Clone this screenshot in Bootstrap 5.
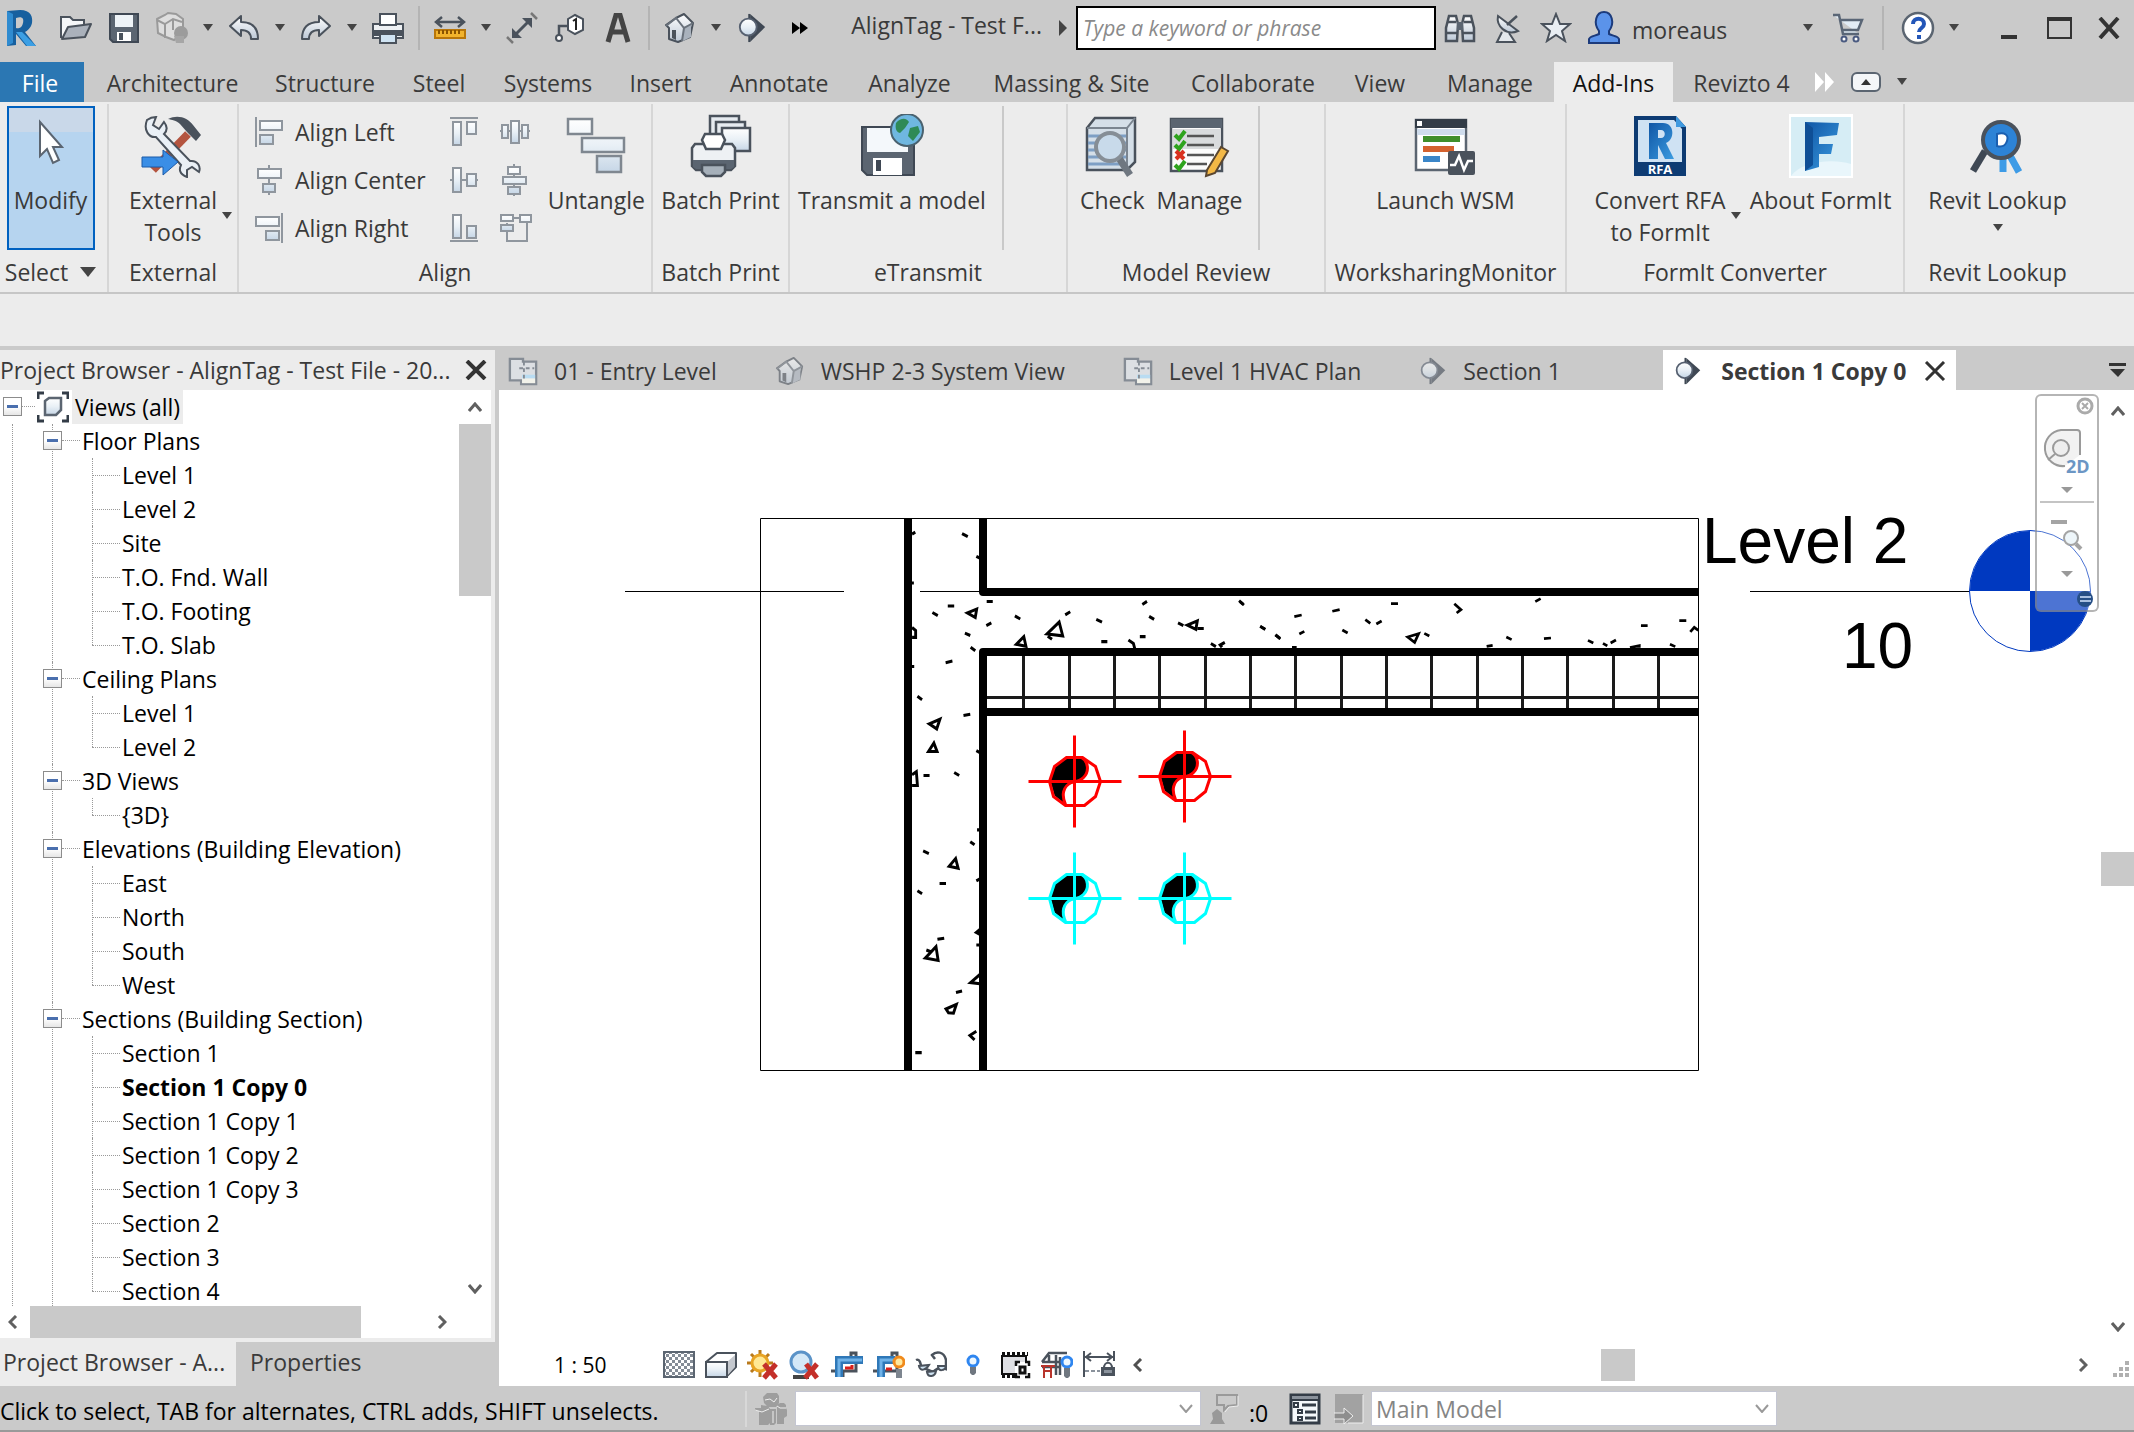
<!DOCTYPE html>
<html lang="en">
<head>
<meta charset="utf-8">
<meta name="viewport" content="width=device-width, initial-scale=1">
<title>AlignTag - Test File</title>
<link href="https://cdn.jsdelivr.net/npm/bootstrap@5.3.0/dist/css/bootstrap.min.css" rel="stylesheet">
<style>
:root{--chrome:#cacaca;--panel:#ececec;--ink:#3a3a3a;--rule:#cdcdcd}
body{font-family:"Open Sans","Noto Sans",sans-serif;font-size:23px;line-height:32px;color:var(--ink);background:#fff}
button{color:inherit;background:none;border:0;padding:0;line-height:inherit}
svg{display:block;flex:none}
.app{height:100vh;overflow:hidden}
.work{min-height:0}
.bg-chrome{background:var(--chrome)}
.bg-panel{background:var(--panel)}
.caret{width:0;height:0;border:5px solid transparent;border-top:7px solid #444;border-bottom:0;display:block}
.caret-lg{border-width:10px 8px 0}
/* title bar */
.titlebar{height:62px;padding-bottom:6px}
.logo-btn{width:52px;padding-left:6px}
.tool{width:48px;height:44px;display:flex;align-items:center;justify-content:center}
.tool-caret{width:24px;height:44px;display:flex;align-items:center;justify-content:center}
.vrule{width:2px;height:44px;background:#b4b4b4;margin:0 6px}
.vrule-wide{margin:0 10px}
.doc-title{padding-bottom:6px}
.search{width:360px;height:44px;border:2px solid #000;border-radius:0;font-size:21px;font-style:italic;padding:0 5px;background:#fff}
.search::placeholder{color:#8a8a8a;opacity:1}
.user{width:168px}
.win{width:50px;height:44px;display:flex;align-items:center;justify-content:center}
.win-group{margin-left:18px}
/* ribbon tabs */
.ribbon-tabs{height:40px;display:grid;grid-template-columns:88fr 169fr 136fr 92fr 126fr 99fr 138fr 123fr 201fr 162fr 92fr 128fr 119fr 137fr 324fr}
.ribbon-tabs a{display:flex;align-items:center;justify-content:center;height:40px;padding-top:2px;color:var(--ink);text-decoration:none;white-space:nowrap;min-width:0}
.ribbon-tabs a.file-tab{background:#2b77b3;color:#fff;margin-right:4px;padding-right:4px}
.ribbon-tabs a.current{background:var(--panel);color:#111}
.ribbon-tabs .tab-extras{min-width:0;padding-left:5px}
/* ribbon */
.ribbon{display:grid;grid-template-columns:109fr 130fr 414fr 137fr 278fr 258fr 241fr 338fr 229fr;height:192px;border-bottom:2px solid #c6c6c6}
.pane{border-right:2px solid #d6d6d6;margin:2px 0;display:flex;flex-direction:column;white-space:nowrap;min-width:0}
.pane:first-child{padding-right:6px}
.pane:last-child{border-right:0;padding-right:44px}
.pane-body{height:148px;padding-top:2px;display:flex;justify-content:center}
.pane-title{height:40px;display:flex;align-items:center;justify-content:center;gap:12px}
.big{height:144px;display:flex;flex-direction:column;align-items:center;padding-top:8px}
.big svg{height:64px;margin-bottom:6px}
.big span{display:block}
.modify{width:88px;border:2px solid #0061c0;background:linear-gradient(#c9d8e9 0 24px,#b6d4ef 24px);padding-top:6px}
.with-caret{position:relative}
.side-caret{position:absolute;right:-15px;top:106px}
.small-cmds{display:grid;grid-template-rows:repeat(3,48px);margin-top:2px}
.cmd{display:flex;align-items:center;gap:12px;height:48px}
.pane-sep{width:2px;background:#c9c9c9;height:144px}
.model-review{padding-left:12px}
.options{height:52px}
/* browser */
.browser{width:499px;border-right:4px solid var(--chrome)}
.browser-head{height:40px}
.browser-list{background:#fff;margin-right:4px}
.tree{position:relative;color:#000;white-space:nowrap}
.tree ul{list-style:none;margin:0;padding:0}
.trow{height:34px;display:flex;align-items:center}
.toggle{width:19px;height:19px;border:1px solid #8c8c8c;background:linear-gradient(#fff 50%,#e6e6e6);display:flex;align-items:center;justify-content:center;position:relative;flex:none}
.toggle::after{content:"";width:11px;height:3px;background:#4a6fae}
.dots{border-top:1px dotted #999;width:18px;margin-right:2px}
.root-row{padding-left:3px}
.root-row .dots{width:13px}
.root-row .root-name{background:var(--panel);height:34px;padding:0 3px;margin-left:3px;display:flex;align-items:center}
.root-line::before,.groups>li::before,.leaves>li::before{content:"";position:absolute;border-left:1px dotted #999;top:0;bottom:0}
.root-line{position:relative}
.root-line::before{left:12px}
.groups>li{position:relative}
.groups>li::before{left:52px}
.groups>li>.trow{padding-left:43px}
.leaves>li{position:relative;height:34px;display:flex;align-items:center;padding-left:92px;line-height:28px}
.leaves>li::before{left:92px}
.leaves>li:last-child::before{bottom:17px}
.leaves>li::after{content:"";position:absolute;left:92px;top:17px;width:28px;border-top:1px dotted #999}
.leaves a{color:#000;text-decoration:none;padding-left:30px}
.sb-v{width:32px}
.sb-cap{height:34px;display:flex;align-items:center;justify-content:center}
.thumb{background:#c9c9c9}
.sb-v .thumb{height:172px}
.sb-h{height:32px}
.sb-h .thumb{width:331px}
.sb-h .sb-cap{width:30px;height:32px}
.sb-h .corner{width:34px}
.browser-tabs{height:48px}
.browser-tabs button{height:48px;padding:0 3px;text-align:left}
.browser-tabs .on{background:var(--panel);width:236px}
.browser-tabs .off{box-shadow:inset 0 4px var(--panel);background:var(--chrome);flex:1;padding-left:14px}
/* document tabs */
.doc-tabs{height:40px}
.doc-tab{height:40px;min-width:253px;display:flex;align-items:center;gap:15px;padding:2px 49px 0 8px;white-space:nowrap}
.doc-tab.on{background:#fff;font-weight:700;padding:2px 10px 0;gap:18px}
.sheet{position:relative}
.sheet>svg.drawing{width:100%;height:100%}
.sheet text{font-family:"Liberation Sans",Arial,sans-serif;font-size:64px;fill:#000}
.sheet .wheel-label{font:700 18px "Open Sans",sans-serif;fill:#6c96c4}
.navbox{position:absolute;top:4px;right:2px;width:64px;height:218px;border:2px solid rgba(120,120,120,.55);border-radius:6px;background:rgba(255,255,255,.3)}
.canvas-sb{width:33px}
.canvas-sb .thumb{height:34px}
.view-bar{height:42px}
.scale{width:109px;margin-left:55px;color:#000;font-size:21px;text-align:left}
.view-icons{gap:10px}
.view-icons button{width:32px;display:flex;justify-content:center}
.view-bar .thumb{width:34px;height:32px}
/* status bar */
.statusbar{height:46px;border-top:1px solid var(--chrome);border-bottom:2px solid #9a9a9a;color:#000}
.status-msg{width:747px;border-right:2px solid #d8d8d8;white-space:nowrap;overflow:hidden;padding-top:4px}
.request-count{width:34px;padding-top:8px}
.option-btn{width:44px}
.combo{position:relative;width:406px}
.combo select{appearance:none;width:100%;height:35px;border:1px solid #c4c6d2;border-radius:0;background:#fff;color:#858585;padding:0 4px;font-size:23px;line-height:30px;display:block}
.combo svg{position:absolute;right:8px;top:13px;pointer-events:none}
</style>
</head>
<body>
<svg width="0" height="0" class="position-absolute" aria-hidden="true">
  <defs>
    <linearGradient id="gl" x1="0" y1="0" x2="0" y2="1"><stop offset="0" stop-color="#fff"/><stop offset="1" stop-color="#bcc8d6"/></linearGradient>
    <linearGradient id="gb" x1="0" y1="0" x2="1" y2="1"><stop offset="0" stop-color="#0f56a5"/><stop offset="1" stop-color="#3b9be0"/></linearGradient>
    <linearGradient id="gs" x1="0" y1="0" x2="0" y2="1"><stop offset="0" stop-color="#fff"/><stop offset=".5" stop-color="#e9f0f6"/><stop offset="1" stop-color="#c6d6e6"/></linearGradient>
    <symbol id="house" viewBox="0 0 32 32"><path d="M2 13 12 6 20 2 29 11 26 25 14 30 5 27V16Z" fill="url(#gl)" stroke="#4a525c" stroke-width="2" stroke-linejoin="round"/><path d="M19 15v14l8-4V12Z" fill="#a9b2bd"/><path d="M2 14 12 6 20 16 29 11M20 16 18 29" fill="none" stroke="#6a727c" stroke-width="2"/><path d="M8 18h4v10l-4-2z" fill="#4a525c"/></symbol>
    <symbol id="sect" viewBox="0 0 32 32"><path d="M14 1 30 15 14 31Z" fill="#3f4854"/><path d="M13 1v30" stroke="#3f4854" stroke-width="2"/><circle cx="12" cy="15" r="9" fill="url(#gs)" stroke="#566070" stroke-width="2"/></symbol>
    <symbol id="plan" viewBox="0 0 32 32"><path d="M2 3h14v3h14v24H14v-4H2Z" fill="#dcdfe3" stroke="#858c95" stroke-width="2.500"/><path d="M15 20h14v4H15z" fill="#b9dcf2"/><path d="M15 24h14v5H15z" fill="#f2f2ea"/><path d="M17 6v18M12 13h16" stroke="#858c95" stroke-width="2" stroke-dasharray="4 3"/></symbol>
  </defs>
</svg>

<div class="app d-flex flex-column">
<header class="titlebar bg-chrome d-flex align-items-center">
  <button class="logo-btn" aria-label="Application menu"><svg width="32" height="38" viewBox="0 0 32 38"><path d="M1 2 14 1C25 1 27 8 26 14 25 19 21 22 19 23L30 37H20L10 25V36L1 37Z" fill="#17609f"/><path d="M10 9c6-2 8 0 7 5s-5 6-7 5Z" fill="#cacaca"/><path d="M1 2 7 5V34L1 37Z" fill="#2f8bd0"/><path d="M10 23h6L30 37H21Z" fill="#3c9fe4"/></svg></button>
  <button class="tool" aria-label="Open"><svg width="32" height="26" viewBox="0 0 32 26"><path d="M1 23V2h9l3 3h11v5" fill="#f4f6f8" stroke="#4a525c" stroke-width="2"/><path d="M2 24 8 12 31 9 25 22Z" fill="#aab1bb" stroke="#4a525c" stroke-width="2" stroke-linejoin="round"/></svg></button>
  <button class="tool" aria-label="Save"><svg width="30" height="30" viewBox="0 0 30 30"><path d="M1 1h28v28H4l-3-3Z" fill="#5b6571" stroke="#3f4854" stroke-width="2"/><path d="M6 2h18v12H6z" fill="#eef3f7"/><path d="M8 19h14v9H8z" fill="#fff"/><path d="M10 20h4v7h-4z" fill="#4a525c"/></svg></button>
  <button class="tool" aria-label="Synchronize"><svg width="32" height="32" viewBox="0 0 32 32"><path d="M1 7 9 3l3-2 8 1 7 5v14l-9 7-8-3-8-4Z" fill="#dedede" stroke="#9a9a9a" stroke-width="2"/><path d="M1 8l8 4v14M9 12l8-5 9 3M17 8v10" fill="none" stroke="#9a9a9a" stroke-width="2"/><circle cx="25" cy="21" r="7" fill="#9c9c9c"/><path d="M18 24h10v7h-8z" fill="#a6a6a6"/></svg></button>
  <button class="tool-caret" aria-label="Synchronize options"><span class="caret"></span></button>
  <button class="tool" aria-label="Undo"><svg width="32" height="28" viewBox="0 0 32 28"><path d="M2 12 13 2v6c11 0 17 6 17 17h-7c0-6-3-9-10-9v6Z" fill="url(#gl)" stroke="#4a525c" stroke-width="2" stroke-linejoin="round"/></svg></button>
  <button class="tool-caret" aria-label="Undo list"><span class="caret"></span></button>
  <button class="tool" aria-label="Redo"><svg width="32" height="28" viewBox="0 0 32 28"><path d="M30 12 19 2v6C8 8 2 14 2 25h7c0-6 3-9 10-9v6Z" fill="url(#gl)" stroke="#4a525c" stroke-width="2" stroke-linejoin="round"/></svg></button>
  <button class="tool-caret" aria-label="Redo list"><span class="caret"></span></button>
  <button class="tool" aria-label="Print"><svg width="32" height="32" viewBox="0 0 32 32"><path d="M1 12h30v14H1z" fill="#edf0f3" stroke="#4a525c" stroke-width="2"/><path d="M8 2h16v11H8z" fill="#fff" stroke="#4a525c" stroke-width="2"/><path d="M2 18h28v6H2z" fill="#4a525c"/><path d="M8 22h16v9H8z" fill="#cfe3f2" stroke="#4a525c" stroke-width="2"/></svg></button>
  <span class="vrule"></span>
  <button class="tool" aria-label="Measure"><svg width="32" height="24" viewBox="0 0 32 24"><path d="M2 6h28M8 1 2 6l6 5M24 1l6 5-6 5" fill="none" stroke="#4a525c" stroke-width="2.500"/><path d="M1 14h30v8H1z" fill="#f2b32c" stroke="#b8760a" stroke-width="2"/><path d="M5 14v4M9 14v4M13 14v4M17 14v4M21 14v4M25 14v4" stroke="#8a5400" stroke-width="2"/></svg></button>
  <button class="tool-caret" aria-label="Measure options"><span class="caret"></span></button>
  <button class="tool" aria-label="Aligned dimension"><svg width="32" height="32" viewBox="0 0 32 32"><path d="M7 25 25 7" stroke="#4a525c" stroke-width="3"/><path d="M6 26V16l10 10ZM26 6v10L16 6Z" fill="#4a525c"/><path d="M1 25l6 6M25 1l6 6" stroke="#777" stroke-width="2.500"/></svg></button>
  <button class="tool" aria-label="Tag by category"><svg width="32" height="30" viewBox="0 0 32 30"><path d="M14 6 21 2l8 4v11l-8 4-7-4Z" fill="#fff" stroke="#4a525c" stroke-width="2"/><path d="M19 8l3-2v11" fill="none" stroke="#222" stroke-width="2"/><path d="M13 13H5v10" fill="none" stroke="#4a525c" stroke-width="2.500"/><circle cx="5" cy="25" r="3" fill="#fff" stroke="#4a525c" stroke-width="2"/></svg></button>
  <button class="tool" aria-label="Text"><svg width="26" height="30" viewBox="0 0 26 30"><path d="M3 29 11 2h4l8 27M7 19h12" fill="none" stroke="#444" stroke-width="5"/></svg></button>
  <span class="vrule"></span>
  <button class="tool" aria-label="Default 3D view"><svg width="32" height="32"><use href="#house"/></svg></button>
  <button class="tool-caret" aria-label="3D view options"><span class="caret"></span></button>
  <button class="tool" aria-label="Section"><svg width="30" height="30"><use href="#sect"/></svg></button>
  <button class="tool" aria-label="More tools"><svg width="16" height="12" viewBox="0 0 16 12"><path d="M0 0l8 6-8 6ZM8 0l8 6-8 6Z" fill="#000"/></svg></button>
  <span class="doc-title flex-grow-1 text-end text-nowrap">AlignTag - Test F...</span>
  <svg class="mx-2 ms-3" width="10" height="16" viewBox="0 0 10 16"><path d="M1 0l8 8-8 8Z" fill="#444"/></svg>
  <input class="search" type="search" placeholder="Type a keyword or phrase" aria-label="Search help">
  <button class="tool" aria-label="Search"><svg width="32" height="30" viewBox="0 0 32 30"><path d="M5 3h7l2 8-1 17H2V15ZM20 3h7l3 12v13H19l-1-17Z" fill="url(#gl)" stroke="#4a525c" stroke-width="2.500"/><path d="M13 9h6v8h-6z" fill="#5b6571"/><path d="M1 20h12M19 20h12M4 9h8M20 9h8" stroke="#4a525c" stroke-width="2.500"/></svg></button>
  <button class="tool" aria-label="Communication center"><svg width="30" height="30" viewBox="0 0 30 30"><path d="M5 3c-2 10 8 20 20 15Z" fill="url(#gl)" stroke="#4a525c" stroke-width="2"/><path d="M14 12 24 3" stroke="#4a525c" stroke-width="2.500"/><path d="M9 19 4 29h18l-6-9" fill="#e4e8ec" stroke="#4a525c" stroke-width="2"/></svg></button>
  <button class="tool" aria-label="Favorites"><svg width="32" height="31" viewBox="0 0 32 31"><path d="M16 2l4 10h10l-8 7 3 10-9-6-9 6 3-10-8-7h10Z" fill="#e9eef3" stroke="#4a525c" stroke-width="2"/></svg></button>
  <button class="tool" aria-label="Account"><svg width="32" height="33" viewBox="0 0 32 33"><path d="M1 32v-4c1-3 6-3 10-5v-3C5 12 8 1 16 1s11 11 5 19v3c4 2 9 2 10 5v4Z" fill="#5b93ea" stroke="#1c3b7c" stroke-width="2"/></svg></button>
  <span class="user ps-1 pt-1">moreaus</span>
  <button class="tool-caret" aria-label="Account options"><span class="caret"></span></button>
  <button class="tool ms-1" aria-label="App store"><svg width="32" height="30" viewBox="0 0 32 30"><path d="M1 2h6l4 19h16M8 7h22l-4 10H11" fill="#e2ecf5" stroke="#5a6676" stroke-width="2.500"/><circle cx="12" cy="26" r="2.500" fill="#fff" stroke="#4a5a80" stroke-width="2"/><circle cx="24" cy="26" r="2.500" fill="#fff" stroke="#4a5a80" stroke-width="2"/></svg></button>
  <span class="vrule vrule-wide"></span>
  <button class="tool" aria-label="Help"><svg width="34" height="34" viewBox="0 0 34 34"><circle cx="17" cy="17" r="15" fill="#fff" stroke="#5b6571" stroke-width="2.500"/><path d="M12 13c0-7 11-7 11 0 0 4-5 4-5 8" fill="none" stroke="#2356b8" stroke-width="4"/><path d="M16 24h4v4h-4z" fill="#2356b8"/></svg></button>
  <button class="tool-caret" aria-label="Help options"><span class="caret"></span></button>
  <div class="win-group d-flex">
    <button class="win" aria-label="Minimize"><svg width="16" height="22" viewBox="0 0 16 22"><path d="M0 18h16v4H0z" fill="#333"/></svg></button>
    <button class="win" aria-label="Maximize"><svg width="25" height="22" viewBox="0 0 25 22"><path d="M1 1h23v20H1z" fill="none" stroke="#333" stroke-width="2"/><path d="M0 0h25v4H0z" fill="#333"/></svg></button>
    <button class="win" aria-label="Close"><svg width="22" height="22" viewBox="0 0 22 22"><path d="M2 1 20 21M20 1 2 21" stroke="#333" stroke-width="4"/></svg></button>
  </div>
</header>

<nav class="ribbon-tabs bg-chrome">
  <a href="#" class="file-tab">File</a><a href="#">Architecture</a><a href="#">Structure</a><a href="#">Steel</a><a href="#">Systems</a><a href="#">Insert</a><a href="#">Annotate</a><a href="#">Analyze</a><a href="#">Massing &amp; Site</a><a href="#">Collaborate</a><a href="#">View</a><a href="#">Manage</a><a href="#" class="current">Add-Ins</a><a href="#">Revizto 4</a>
  <div class="tab-extras d-flex align-items-center gap-3">
    <svg width="20" height="20" viewBox="0 0 20 20"><path d="M0 0l9 10-9 10ZM10 0l9 10-9 10Z" fill="#fff"/></svg>
    <button aria-label="Minimize ribbon"><svg width="30" height="20" viewBox="0 0 30 20"><rect x="1" y="1" width="28" height="18" rx="5" fill="#f4f6f8" stroke="#5b6571" stroke-width="2"/><path d="M10 13l5-6 5 6Z" fill="#333"/></svg></button>
    <button aria-label="Ribbon options"><span class="caret"></span></button>
  </div>
</nav>

<section class="ribbon bg-panel">
  <div class="pane">
    <div class="pane-body"><button class="big modify"><svg width="30" viewBox="0 0 30 64"><path d="M4 8v34l7-7 6 14 6-3-6-13h9Z" fill="#fff" stroke="#5b6571" stroke-width="2"/></svg><span>Modify</span></button></div>
    <div class="pane-title">Select <span class="caret caret-lg"></span></div>
  </div>
  <div class="pane">
    <div class="pane-body"><button class="big with-caret"><svg width="64" viewBox="0 0 64 64"><path d="M47 20 12 56" stroke="#b4543f" stroke-width="8"/><path d="M27 5c10-5 20-1 25 6l8 10-5 6-9-9-7-8c-4-4-8-4-12-5Z" fill="#4a525c"/><path d="M6 6c4-3 7-3 9-3l-3 8 6 4 5-7c4 5 3 9 0 12l26 27c8-1 11 6 9 11l-7-5-5 3v7c-8-3-8-8-6-12L15 23C8 24 2 16 6 6Z" fill="#eaf0f6" stroke="#4a525c" stroke-width="2"/><path d="M1 43h21v-7l15 12-15 13v-8H1Z" fill="#3a8ee6" stroke="#1b5aa8" stroke-width="1"/></svg><span>External</span><span>Tools</span><i class="caret side-caret"></i></button></div>
    <div class="pane-title">External</div>
  </div>
  <div class="pane">
    <div class="pane-body justify-content-start ps-3">
      <div class="small-cmds me-4">
        <button class="cmd"><svg width="28" height="30" viewBox="0 0 28 30" fill="url(#gs)" stroke="#8f969e" stroke-width="2"><path d="M1 0v30"/><path d="M5 4h22v9H5zM5 18h13v9H5z"/></svg>Align Left</button>
        <button class="cmd"><svg width="28" height="30" viewBox="0 0 28 30" fill="url(#gs)" stroke="#8f969e" stroke-width="2"><path d="M14 0v30"/><path d="M3 4h23v9H3zM8 19h12v8H8z"/></svg>Align Center</button>
        <button class="cmd"><svg width="28" height="30" viewBox="0 0 28 30" fill="url(#gs)" stroke="#8f969e" stroke-width="2"><path d="M27 0v30"/><path d="M1 4h23v9H1zM11 18h13v9H11z"/></svg>Align Right</button>
      </div>
      <div class="small-cmds me-3">
        <button class="cmd" aria-label="Align top"><svg width="30" height="30" viewBox="0 0 30 30" fill="url(#gs)" stroke="#8f969e" stroke-width="2"><path d="M0 1h28"/><path d="M3 5h8v23H3zM17 5h9v12h-9z"/></svg></button>
        <button class="cmd" aria-label="Align middle"><svg width="30" height="30" viewBox="0 0 30 30" fill="url(#gs)" stroke="#8f969e" stroke-width="2"><path d="M0 15h28"/><path d="M3 3h8v24H3zM17 9h9v12h-9z"/></svg></button>
        <button class="cmd" aria-label="Align bottom"><svg width="30" height="30" viewBox="0 0 30 30" fill="url(#gs)" stroke="#8f969e" stroke-width="2"><path d="M0 28h28"/><path d="M3 2h8v23H3zM17 13h9v12h-9z"/></svg></button>
      </div>
      <div class="small-cmds me-3 ms-1">
        <button class="cmd" aria-label="Distribute horizontally"><svg width="30" height="30" viewBox="0 0 30 30" fill="url(#gs)" stroke="#8f969e" stroke-width="2"><path d="M0 14h30"/><path d="M2 8h6v13H2zM11 4h8v22h-8zM22 8h6v13h-6z"/></svg></button>
        <button class="cmd" aria-label="Distribute vertically"><svg width="30" height="32" viewBox="0 0 30 32" fill="url(#gs)" stroke="#8f969e" stroke-width="2"><path d="M14 0v32"/><path d="M8 3h12v7H8zM3 13h23v7H3zM8 23h12v7H8z"/></svg></button>
        <button class="cmd" aria-label="Arrange tags"><svg width="32" height="30" viewBox="0 0 32 30" fill="url(#gs)" stroke="#8f969e" stroke-width="2"><path d="M7 10v18h20V8" fill="none"/><path d="M1 2h12v6H1zM1 12h12v6H1zM20 2h11v7H20zM13 5h7"/></svg></button>
      </div>
      <button class="big"><svg width="60" viewBox="0 0 60 64" fill="url(#gs)" stroke="#7f8790" stroke-width="2.500"><path d="M2 5h24v15H2zM16 24h42v14H16zM31 42h24v16H31z"/></svg><span>Untangle</span></button>
    </div>
    <div class="pane-title">Align</div>
  </div>
  <div class="pane">
    <div class="pane-body"><button class="big"><svg width="62" viewBox="0 0 62 64" stroke="#4a525c" stroke-width="2.500"><path d="M20 2h29v25H20z" fill="#e6ebf0"/><path d="M26 8h29v25H26z" fill="#e6ebf0"/><path d="M32 14h28v23H32z" fill="url(#gs)"/><path d="M5 30h37l3 4v18l-4 4H6l-4-4V34Z" fill="#eef1f4"/><path d="M12 26l3-6h17l3 6-4 9H16Z" fill="#fff"/><path d="M3 46h41v7l-3 2H6l-3-2Z" fill="#5b6571" stroke="none"/><path d="M12 51h23v7l-4 4H16l-4-4Z" fill="#a6b0ba"/></svg><span>Batch Print</span></button></div>
    <div class="pane-title">Batch Print</div>
  </div>
  <div class="pane">
    <div class="pane-body justify-content-start ps-2 gap-3"><button class="big"><svg width="64" viewBox="0 0 64 64"><path d="M2 13h52v48H7l-5-5Z" fill="#5b6571" stroke="#3f4854" stroke-width="2"/><path d="M7 14h41v24H7z" fill="#f4f8fb"/><path d="M13 44h29v17H13z" fill="#fff"/><path d="M16 46h5v11h-5z" fill="#3f4854"/><circle cx="47" cy="16" r="16" fill="#6fb7e0" stroke="#4a626f" stroke-width="2"/><path d="M36 9c5-6 11-5 13-1l-4 6-5 5c-4-1-5-5-4-10ZM50 14l8-2 2 6-7 9-5-5Z" fill="#2f8a57"/></svg><span>Transmit a model</span></button><span class="pane-sep"></span></div>
    <div class="pane-title">eTransmit</div>
  </div>
  <div class="pane">
    <div class="pane-body model-review justify-content-start gap-3"><div class="d-flex gap-2"><button class="big"><svg width="56" viewBox="0 0 56 64"><path d="M3 14 11 4h40v44l-8 8H3Z" fill="#d5dfe8" stroke="#4a525c" stroke-width="2.500"/><path d="M3 14h40l8-10M43 14v42" fill="none" stroke="#7b8590" stroke-width="2"/><path d="M4 22h38M4 29h38M4 36h38M4 43h38M4 50h38" stroke="#7e9fc4" stroke-width="3"/><path d="M35 44 46 61" stroke="#6f7780" stroke-width="7"/><circle cx="26" cy="33" r="14" fill="#c8daea" stroke="#868e96" stroke-width="4"/></svg><span>Check</span></button>
    <button class="big ms-1"><svg width="62" viewBox="0 0 62 64"><path d="M3 5h51v52H3z" fill="#fbfbfb" stroke="#4a525c" stroke-width="2.500"/><path d="M3 5h51v9H3z" fill="#5b6571"/><path d="M5 15h48v20H5z" fill="#d9dbdd"/><path d="M19 22h27M19 31h27M19 41h27M19 50h20" stroke="#555" stroke-width="2.500"/><path d="M7 21l4 4 6-8M7 31l4 4 6-8M7 51l4 4 6-8" fill="none" stroke="#2ea31d" stroke-width="4"/><path d="M8 37l8 8M16 37l-8 8" stroke="#d8311f" stroke-width="4"/><path d="M39 56 53 33l7 4-13 22-9 3Z" fill="#f3b846" stroke="#5a4630" stroke-width="2"/></svg><span>Manage</span></button></div><span class="pane-sep"></span></div>
    <div class="pane-title">Model Review</div>
  </div>
  <div class="pane">
    <div class="pane-body"><button class="big"><svg width="62" viewBox="0 0 62 64"><path d="M2 6h50v50H2z" fill="#fff" stroke="#5b6571" stroke-width="2.500"/><path d="M1 5h52v9H1z" fill="#333c47"/><path d="M3 7h5v5H3z" fill="#fff"/><path d="M3 15h48v6H3z" fill="#cfdcec"/><path d="M9 22h37v6H9z" fill="#3f8f2b"/><path d="M9 32h31v6H9z" fill="#d4622e"/><path d="M9 42h17v6H9z" fill="#3b86c8"/><rect x="34" y="37" width="27" height="24" rx="2" fill="#4a525c"/><path d="M36 51h5l4-9 5 14 4-9h5" fill="none" stroke="#fff" stroke-width="2.500"/></svg><span>Launch WSM</span></button></div>
    <div class="pane-title">WorksharingMonitor</div>
  </div>
  <div class="pane">
    <div class="pane-body gap-4 ps-3"><button class="big with-caret"><svg width="56" viewBox="0 0 56 64"><path d="M2 2h42l10 11v49H2Z" fill="#0d3b73"/><path d="M6 6h36l8 9v33H6Z" fill="#cfe2f3"/><path d="M44 2 54 13H44Z" fill="#3f9ae0"/><path d="M17 9h14c12 0 12 17 3 20l8 16H33L26 31v14h-9Z" fill="url(#gb)"/><path d="M26 16h3c5 0 5 8 0 8h-3Z" fill="#cfe2f3"/><text x="28" y="60" text-anchor="middle" font-family="Open Sans,sans-serif" font-size="13" font-weight="700" fill="#fff">RFA</text></svg><span>Convert RFA</span><span>to FormIt</span><i class="caret side-caret"></i></button>
    <button class="big"><svg width="64" viewBox="0 0 64 64"><path d="M0 0h64v64H0z" fill="#fff"/><path d="M2 3h60v59H2z" fill="#d6edf5"/><path d="M2 62c10-14 40-18 60-12v12Z" fill="#e9f6fb"/><path d="M16 8 50 9l-2 12-18 2v7h14l-2 10H30v13L16 57Z" fill="url(#gb)"/><path d="M16 8 24 14v37l-8 6Z" fill="#0f4f96"/></svg><span>About FormIt</span></button></div>
    <div class="pane-title">FormIt Converter</div>
  </div>
  <div class="pane">
    <div class="pane-body"><button class="big"><svg width="56" viewBox="0 0 56 64"><path d="M15 37 3 57" stroke="#3f4854" stroke-width="7"/><path d="M33 40v18M38 38l11 20" stroke="#3d9be6" stroke-width="7"/><circle cx="31" cy="26" r="18" fill="#2d83d6" stroke="#4a525c" stroke-width="4"/><path d="M27 20c8-2 12 1 10 7s-7 6-10 5Z" fill="#fff" stroke="#1b5fb0" stroke-width="2"/></svg><span>Revit Lookup</span><i class="caret mt-2"></i></button></div>
    <div class="pane-title">Revit Lookup</div>
  </div>
</section>
<div class="options bg-panel"></div>

<main class="work d-flex flex-grow-1 bg-chrome pt-1">
  <aside class="browser bg-panel d-flex flex-column flex-shrink-0">
    <div class="browser-head d-flex align-items-center justify-content-between pe-2"><span class="text-nowrap">Project Browser - AlignTag - Test File - 20...</span><button aria-label="Close browser"><svg width="22" height="20" viewBox="0 0 22 20"><path d="M2 1 20 19M20 1 2 19" stroke="#333" stroke-width="4"/></svg></button></div>
    <div class="browser-list d-flex flex-grow-1 overflow-hidden">
      <div class="tree flex-grow-1">
        <div class="trow root-row"><button class="toggle" aria-label="Collapse Views"></button><span class="dots"></span><svg width="32" height="32" viewBox="0 0 32 32"><path d="M1 8V2h6M25 2h6v6M31 24v6h-6M7 30H1v-6" fill="none" stroke="#333c47" stroke-width="3"/><path d="M8 10 12 7h12v12l-5 5H8Z" fill="url(#gs)" stroke="#5b6571" stroke-width="2.500"/></svg><span class="root-name">Views (all)</span></div>
        <div class="root-line">
        <ul class="groups">
          <li><div class="trow"><button class="toggle" aria-label="Collapse Floor Plans"></button><span class="dots"></span>Floor Plans</div>
            <ul class="leaves"><li><a href="#">Level 1</a></li><li><a href="#">Level 2</a></li><li><a href="#">Site</a></li><li><a href="#">T.O. Fnd. Wall</a></li><li><a href="#">T.O. Footing</a></li><li><a href="#">T.O. Slab</a></li></ul></li>
          <li><div class="trow"><button class="toggle" aria-label="Collapse Ceiling Plans"></button><span class="dots"></span>Ceiling Plans</div>
            <ul class="leaves"><li><a href="#">Level 1</a></li><li><a href="#">Level 2</a></li></ul></li>
          <li><div class="trow"><button class="toggle" aria-label="Collapse 3D Views"></button><span class="dots"></span>3D Views</div>
            <ul class="leaves"><li><a href="#">{3D}</a></li></ul></li>
          <li><div class="trow"><button class="toggle" aria-label="Collapse Elevations"></button><span class="dots"></span>Elevations (Building Elevation)</div>
            <ul class="leaves"><li><a href="#">East</a></li><li><a href="#">North</a></li><li><a href="#">South</a></li><li><a href="#">West</a></li></ul></li>
          <li><div class="trow"><button class="toggle" aria-label="Collapse Sections"></button><span class="dots"></span>Sections (Building Section)</div>
            <ul class="leaves"><li><a href="#">Section 1</a></li><li><a href="#" class="fw-bold">Section 1 Copy 0</a></li><li><a href="#">Section 1 Copy 1</a></li><li><a href="#">Section 1 Copy 2</a></li><li><a href="#">Section 1 Copy 3</a></li><li><a href="#">Section 2</a></li><li><a href="#">Section 3</a></li><li><a href="#">Section 4</a></li></ul></li>
        </ul>
        </div>
      </div>
      <div class="sb-v d-flex flex-column flex-shrink-0">
        <div class="sb-cap"><svg width="14" height="10" viewBox="0 0 14 10"><path d="M1 9l6-7 6 7" fill="none" stroke="#606060" stroke-width="3"/></svg></div>
        <div class="thumb"></div>
        <div class="sb-cap mt-auto"><svg width="14" height="10" viewBox="0 0 14 10"><path d="M1 1l6 7 6-7" fill="none" stroke="#606060" stroke-width="3"/></svg></div>
      </div>
    </div>
    <div class="sb-h browser-list d-flex flex-shrink-0">
      <div class="sb-cap pe-1"><svg width="10" height="14" viewBox="0 0 10 14"><path d="M8 1 2 7l6 6" fill="none" stroke="#606060" stroke-width="3"/></svg></div>
      <div class="thumb"></div>
      <div class="sb-cap ms-auto"><svg width="10" height="14" viewBox="0 0 10 14"><path d="M2 1l6 6-6 6" fill="none" stroke="#606060" stroke-width="3"/></svg></div>
      <div class="corner"></div>
    </div>
    <div class="browser-tabs d-flex flex-shrink-0"><button class="on text-nowrap">Project Browser - A...</button><button class="off">Properties</button></div>
  </aside>

  <section class="d-flex flex-column flex-grow-1">
    <div class="doc-tabs d-flex">
      <button class="doc-tab"><svg width="32" height="30"><use href="#plan"/></svg>01 - Entry Level</button>
      <button class="doc-tab"><svg width="32" height="30" opacity=".6"><use href="#house"/></svg>WSHP 2-3 System View</button>
      <button class="doc-tab"><svg width="32" height="30"><use href="#plan"/></svg>Level 1 HVAC Plan</button>
      <button class="doc-tab"><svg width="30" height="28" opacity=".6"><use href="#sect"/></svg>Section 1</button>
      <button class="doc-tab on"><svg width="30" height="28"><use href="#sect"/></svg>Section 1 Copy 0<svg width="22" height="20" viewBox="0 0 22 20"><path d="M2 1 20 19M20 1 2 19" stroke="#333" stroke-width="3"/></svg></button>
      <button class="ms-auto pe-2" aria-label="Tab list"><svg width="17" height="14" viewBox="0 0 17 14"><path d="M0 0h17v3H0zM1 6h15l-7 8Z" fill="#333"/></svg></button>
    </div>
    <div class="work d-flex flex-grow-1 bg-white">
      <div class="sheet flex-grow-1 overflow-hidden">
        <svg class="drawing" viewBox="499 390 1602 954" preserveAspectRatio="xMinYMin meet">
          <!-- crop region and level line -->
          <path d="M760.500 518.500h938v552h-938z" fill="none" stroke="#000"/>
          <path d="M625 591.500h219M920 591.500h60M1750 591.500h220" stroke="#000"/>
          <!-- aggregate in the wall -->
          <g transform="translate(740 500) scale(.357 .3827)" fill="none" stroke="#000" stroke-width="8">
            <path d="M482 89l9-5M622 88l16 8M662 147l10 5M480 217h7M582 277h18M691 265h17M539 294l15 8M690 328l14-7M630 348l15 6M646 385l13 9M480 435h8M576 425l19-4M497 513l13 9M626 563l19-3M662 655l10 5M514 720h17M600 712l14 8M664 862h8M645 893l12 8M513 917l16 7M559 1002h18M497 1021l13 8M662 995l10-5M553 1148l19-3M605 1287l17-4M491 1444h18M662 1388l-18 11 13 12M662 1163h10"/>
            <path d="M637 295l26-10-4 22ZM482 333l10 8v18h-10M530 585l30-12-9 25ZM543 635l-15 22h24ZM482 718l12-8 3 36h-15M586 957l18-20 7 25ZM519 1197l30-30 6 36ZM522 1176l14 5M672 1240l-26 21 26 3M577 1330l29-12-8 23-14-1ZM672 1122l-10 8 10 5" />
            <path d="M770 303l15 8M911 300l14-8M998 312l16 7M1127 273l13-8M1146 304l14 8M1012 370h17M1088 366l14 9 4 14M1120 357h16M1227 321l15 7M1281 336h18M1398 263l12 10M1457 330l14 8M1500 352l13 10M1319 375l14 8M1358 372l-13 7 5 6"/>
            <path d="M774 377l21-20 6 25ZM860 350l34-31 10 36ZM862 356l12 8M1253 327l28-11-4 22Z"/>
          </g>
          <!-- aggregate in the slab -->
          <g transform="translate(1240 500) scale(.3333)" fill="none" stroke="#000" stroke-width="8">
            <path d="M0 305l12 10M61 379l15 9M106 405l15 12M163 350l22-5M178 402l15-8M156 442h14M277 334l22-5M307 390l16 9M376 359l15 11M409 372l16-9M453 311h21M553 400l15 8M643 311l20 18-13 10M740 439l18-3M799 411l16 8M886 305l16-9M912 416l21-2M1044 421l16 8M1089 430l13 8M1112 429l16-9M1170 443l28-6v6M1203 377h20M1290 433l16 7M1318 362h21M1351 396l12-14 12 9"/>
            <path d="M503 411l33-10-12 26Z"/>
          </g>
          <!-- ceiling grid -->
          <path d="M987 697.500h711M1023.500 656v52M1069.500 656v52M1114.500 656v52M1159.500 656v52M1205.500 656v52M1250.500 656v52M1295.500 656v52M1341.500 656v52M1386.500 656v52M1431.500 656v52M1477.500 656v52M1522.500 656v52M1567.500 656v52M1613.500 656v52M1658.500 656v52" stroke="#1a1a1a" stroke-width="3" fill="none"/>
          <path d="M908 518v552M983 518v74h715M983 1070V652h715M983 712h715" stroke="#000" stroke-width="8" fill="none" stroke-linejoin="round"/>
          <defs>
            <g id="pipe">
              <path d="M-24 0-20-15-8-24H7c7 4 8 14 2 20-4 4-8 4-12 5-9 4-10 13-6 22L-20 14Z" fill="#000"/>
              <path d="M-25 0-20-15-8-24H8L21-15 26 0 21 15 10 24H-9L-21 15ZM7-24c7 4 8 14 2 20-4 4-8 4-12 5-9 4-10 13-6 22M-46 0h93M0-46v92" fill="none" stroke="currentColor" stroke-width="3"/>
            </g>
          </defs>
          <g color="#f00"><use href="#pipe" x="1074.500" y="781.500"/><use href="#pipe" x="1184.500" y="776.500"/></g>
          <g color="#0ff"><use href="#pipe" x="1074.500" y="898.500"/><use href="#pipe" x="1184.500" y="898.500"/></g>
          <!-- level head -->
          <circle cx="2030" cy="591" r="60.500" fill="#fff" stroke="#0039c0"/>
          <path d="M2030 591v-60a60 60 0 0 0-60 60ZM2030 591v60a60 60 0 0 0 60-60Z" fill="#0039c0"/>
          <text x="1702" y="563">Level 2</text>
          <text x="1842" y="668">10</text>
        </svg>
        <div class="navbox"><svg width="60" height="214" viewBox="2038 396 60 214">
          <circle cx="2086" cy="406" r="7" fill="#fff" stroke="#aaa" stroke-width="3"/><path d="M2083 403l6 6M2089 403l-6 6" stroke="#aaa" stroke-width="2"/>
          <path d="M2081 455v-22q0-3-3-3h-16a18 18 0 1 0 4 36" fill="#f2f2f2" stroke="#9a9a9a" stroke-width="2"/><circle cx="2062" cy="448" r="8" fill="#eee" stroke="#9a9a9a" stroke-width="2"/><path d="M2056 454l-7 6" stroke="#9a9a9a" stroke-width="2"/>
          <text class="wheel-label" x="2067" y="473">2D</text>
          <path d="M2062 487h12l-6 6Z" fill="#999"/><path d="M2041 502h54" stroke="#c4c4c4" stroke-width="2"/>
          <path d="M2052 522h16" stroke="#a4a4a4" stroke-width="4"/><circle cx="2072" cy="538" r="7" fill="#eef6fa" stroke="#a4a4a4" stroke-width="2"/><path d="M2077 544l5 5" stroke="#a4a4a4" stroke-width="4"/>
          <path d="M2062 571h12l-6 6Z" fill="#999"/>
          <circle cx="2086" cy="599" r="8" fill="#264f86"/><path d="M2081 597h11M2081 601h11" stroke="#a9c0e0" stroke-width="2"/>
        </svg></div>
      </div>
      <div class="canvas-sb d-flex flex-column">
        <div class="sb-cap mt-1"><svg width="14" height="10" viewBox="0 0 14 10"><path d="M1 9l6-7 6 7" fill="none" stroke="#606060" stroke-width="3"/></svg></div>
        <div class="thumb my-auto"></div>
        <div class="sb-cap"><svg width="14" height="10" viewBox="0 0 14 10"><path d="M1 1l6 7 6-7" fill="none" stroke="#606060" stroke-width="3"/></svg></div>
      </div>
    </div>
    <div class="view-bar d-flex align-items-center bg-white">
      <button class="scale ps-0">1 : 50</button>
      <div class="view-icons d-flex align-items-center">
        <button aria-label="Detail level"><svg width="32" height="28" viewBox="0 0 32 28"><defs><pattern id="chk" width="6" height="6" patternUnits="userSpaceOnUse"><path d="M0 0h3v3H0zM3 3h3v3H3z" fill="#848c96"/></pattern></defs><path d="M1 1h30v25H1z" fill="#fff"/><path d="M1 1h30v25H1z" fill="url(#chk)" stroke="#5b6571" stroke-width="2"/></svg></button>
        <button aria-label="Visual style"><svg width="32" height="28" viewBox="0 0 32 28"><path d="M1 11 12 2h19v14l-10 10H1Z" fill="#fff" stroke="#4a525c" stroke-width="2" stroke-linejoin="round"/><path d="M22 11 30 4v12l-8 9Z" fill="#c4c8ce"/><path d="M1 11h21v15H1z" fill="url(#gs)" stroke="#4a525c" stroke-width="2"/></svg></button>
        <button aria-label="Sun path"><svg width="32" height="30" viewBox="0 0 32 30"><path d="M13 0v27M0 13h26M4 4l18 18M22 4 4 22" stroke="#b97a1c" stroke-width="3"/><circle cx="13" cy="13" r="8" fill="#ffe894" stroke="#e8a424" stroke-width="3"/><path d="M17 14l12 14M29 14 17 28" stroke="#c4302a" stroke-width="5"/></svg></button>
        <button aria-label="Shadows"><svg width="32" height="30" viewBox="0 0 32 30"><path d="M4 27h16" stroke="#444" stroke-width="4"/><circle cx="12" cy="12" r="10" fill="#d4e8f7" stroke="#5b93c8" stroke-width="3"/><path d="M17 14l11 14M28 14 16 28" stroke="#c4302a" stroke-width="5"/></svg></button>
        <button aria-label="Crop view"><svg width="32" height="28" viewBox="0 0 32 28"><path d="M0 20h25V2h-5v5M12 26v-6" stroke="#4a525c" stroke-width="3" fill="none"/><path d="M8 26V9h24" fill="none" stroke="#2f78b8" stroke-width="8"/><path d="M8 26V9h23" fill="none" stroke="#6fb2e8" stroke-width="3"/><path d="M14 17h7v-3" stroke="#d8201c" stroke-width="3" fill="none"/></svg></button>
        <button aria-label="Show crop region"><svg width="32" height="28" viewBox="0 0 32 28"><path d="M0 20h24V2h-5v5" stroke="#4a525c" stroke-width="3" fill="none"/><path d="M8 26V9h14" fill="none" stroke="#2f78b8" stroke-width="8"/><path d="M8 26V9h14" fill="none" stroke="#6fb2e8" stroke-width="3"/><path d="M13 18h6" stroke="#d8201c" stroke-width="3"/><circle cx="26" cy="11" r="5" fill="#ffe9a0" stroke="#f08a1c" stroke-width="3"/><path d="M23 18h6v9h-6z" fill="#7d858f"/></svg></button>
        <button aria-label="Temporary hide/isolate"><svg width="32" height="28" viewBox="0 0 32 28"><path d="M1 9c4-2 5 5 5 7l12 5c4-4 8-5 13-3V9c-2-9-10-9-14-5l3 4" fill="none" stroke="#4a525c" stroke-width="2.500"/><path d="M4 15c1 6 7 4 10-1ZM12 21c1 6 8 5 9-1ZM23 15c0 6 7 5 8 0Z" fill="#cfe3f2" stroke="#4a525c" stroke-width="2"/></svg></button>
        <button aria-label="Reveal hidden elements"><svg width="16" height="22" viewBox="0 0 16 22"><circle cx="8" cy="7" r="5" fill="#eef8ff" stroke="#2f86f0" stroke-width="3"/><path d="M5 13h6v6l-2 2H7l-2-2Z" fill="#6f7780"/></svg></button>
        <button aria-label="View properties"><svg width="32" height="28" viewBox="0 0 32 28"><path d="M3 5h24v18H3z" fill="#dfe0e4" stroke="#111" stroke-width="2"/><path d="M3 3h26M3 25h14" stroke="#111" stroke-width="4" stroke-dasharray="3 2"/><path d="M16 11h15v16H16z" fill="#fff"/><path d="M17 15v-4h4M26 11h4v4M30 22v4h-4M21 26h-4v-4" fill="none" stroke="#111" stroke-width="2.500"/><path d="M21 16h5v6h-5z" fill="none" stroke="#111" stroke-width="3"/></svg></button>
        <button aria-label="Analytical model"><svg width="32" height="28" viewBox="0 0 32 28"><path d="M1 11 8 2h18M1 11h18M1 16h18M8 4v8M15 4v20M19 6v18" fill="none" stroke="#4a525c" stroke-width="2.500"/><path d="M3 27V15M10 27V15M0 15h14M3 20h7" stroke="#b8342c" stroke-width="2" fill="none"/><circle cx="26" cy="11" r="5" fill="#eef8ff" stroke="#2f86f0" stroke-width="3"/><path d="M23 17h6v8l-2 2h-2l-2-2Z" fill="#6f7780"/></svg></button>
        <button aria-label="Reveal constraints"><svg width="32" height="28" viewBox="0 0 32 28"><path d="M1 0v26M31 0v10M2 6h28M8 2 3 6l5 4M24 2l5 4-5 4" fill="none" stroke="#4a525c" stroke-width="2"/><path d="M2 20h15" stroke="#8a929c" stroke-width="2" stroke-dasharray="4 2"/><path d="M21 17c0-7 8-7 8 0" fill="none" stroke="#4a525c" stroke-width="2"/><path d="M18 16h14v9H18z" fill="#4a525c"/><path d="M21 19h8v3h-8z" fill="#8a929c"/></svg></button>
        <button class="justify-content-start ps-2" aria-label="Scroll left"><svg width="10" height="14" viewBox="0 0 10 14"><path d="M8 1 2 7l6 6" fill="none" stroke="#505050" stroke-width="3"/></svg></button>
      </div>
      <div class="flex-grow-1 d-flex justify-content-center"><div class="thumb"></div></div>
      <svg class="me-4" width="10" height="14" viewBox="0 0 10 14"><path d="M2 1l6 6-6 6" fill="none" stroke="#606060" stroke-width="3"/></svg>
      <svg class="me-1 mt-2" width="18" height="18" viewBox="0 0 18 18"><path d="M13 1h4v4h-4zM7 7h4v4H7zM13 7h4v4h-4zM1 13h4v4H1zM7 13h4v4H7zM13 13h4v4h-4z" fill="#b0b0b0"/></svg>
    </div>
  </section>
</main>

<footer class="statusbar bg-chrome d-flex align-items-center flex-shrink-0">
  <div class="status-msg">Click to select, TAB for alternates, CTRL adds, SHIFT unselects.</div>
  <button class="tool" aria-label="Worksets"><svg width="32" height="32" viewBox="0 0 32 32"><path d="M8 4l4-4h10l2 3v7l-3 4h-8l-4-4ZM0 15h6v-3l7 1 2 3v14l-2 2H4V18H0ZM15 16h6v14l-2 2h-4ZM22 12l3-2h4l2 2v3l1 2v6l-3 2v6h-7V20Z" fill="#9e9e9e"/><path d="M10 7l5-1 4 3 3-4M0 17l7 2 7-3M22 13l3 2h6M18 18v12" fill="none" stroke="#eee" stroke-width="1"/></svg></button>
  <div class="combo"><select aria-label="Active workset"><option></option></select><svg width="14" height="9" viewBox="0 0 14 9"><path d="M1 1l6 7 6-7" fill="none" stroke="#999" stroke-width="2"/></svg></div>
  <button class="tool" aria-label="Editing requests"><svg width="32" height="32" viewBox="0 0 32 32"><path d="M8 2h20v10l-9 1-4 4v-5H8Z" fill="#cacaca" stroke="#9a9a9a" stroke-width="2"/><path d="M29 3v10l-9 1-4 5" fill="none" stroke="#eee" stroke-width="1"/><path d="M3 20l5-4 5 4v6l3 5H1l3-5Z" fill="#999"/></svg></button>
  <span class="request-count">:0</span>
  <button class="tool option-btn" aria-label="Design options"><svg width="32" height="32" viewBox="0 0 32 32"><path d="M2 2h28v28H2z" fill="#f4f8fb" stroke="#333c47" stroke-width="3"/><path d="M2 2h28v5H2z" fill="#8a929c" stroke="#333c47" stroke-width="2"/><path d="M5 10h4v4H5zM9 17h4v3H9zM9 24h4v3H9z" fill="none" stroke="#333c47" stroke-width="2"/><path d="M13 12h14M16 19h11M16 25h11" stroke="#333c47" stroke-width="3"/></svg></button>
  <button class="tool option-btn" aria-label="Active only"><svg width="30" height="32" viewBox="0 0 30 32"><path d="M1 1h28v29H1z" fill="#a2a2a2"/><path d="M29 2v28H14" fill="none" stroke="#eee" stroke-width="1"/><path d="M0 20h10v-5l9 8-9 8v-5H0Z" fill="#8e8e8e" stroke="#eee" stroke-width="1"/></svg></button>
  <div class="combo"><select aria-label="Design option"><option>Main Model</option></select><svg width="14" height="9" viewBox="0 0 14 9"><path d="M1 1l6 7 6-7" fill="none" stroke="#999" stroke-width="2"/></svg></div>
</footer>
</div>
<script src="https://cdn.jsdelivr.net/npm/bootstrap@5.3.0/dist/js/bootstrap.bundle.min.js"></script>
</body>
</html>
